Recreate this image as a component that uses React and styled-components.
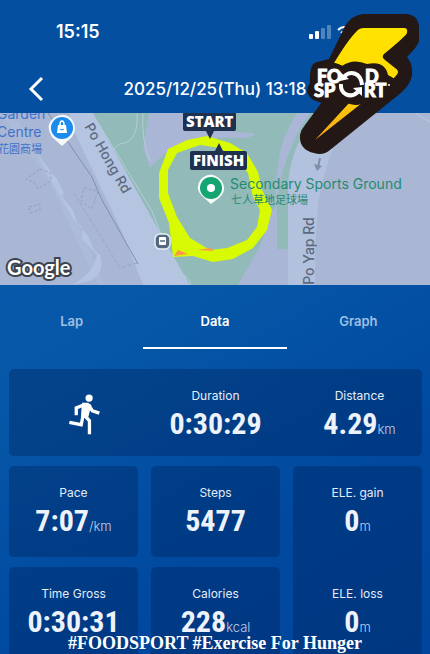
import React from "react";
import styled, { createGlobalStyle, css } from "styled-components";

const GlobalStyle = createGlobalStyle`
  *, *::before, *::after { box-sizing: border-box; }
  body { margin: 0; background: #02489a; font-family: Inter, "Noto Sans CJK TC", sans-serif; }
`;

const Screen = styled.div`
  position: relative;
  display: flex;
  flex-direction: column;
  height: 100vh;
  overflow: hidden;
  color: #fff;
  background: linear-gradient(150deg, #0a5cae 0%, #0657a8 45%, #00499f 75%, #00459b 100%);
`;

const Header = styled.header`
  flex: none;
  background: #044f9f;
`;

const StatusBar = styled.div`
  display: flex;
  align-items: center;
  justify-content: space-between;
  height: 64px;
  padding: 0 78px 0 56px;
`;

const StatusIcons = styled.div`
  display: flex;
  align-items: center;
  gap: 5px;
`;

const Clock = styled.time`
  font-size: 18px;
  line-height: 24px;
  font-weight: 600;
`;

const NavRow = styled.div`
  display: grid;
  grid-template-columns: 72px 1fr 72px;
  align-items: center;
  height: 49px;
`;

const BackButton = styled.button`
  display: flex;
  justify-content: center;
  padding: 0;
  border: 0;
  background: none;
  color: inherit;
`;

const Title = styled.h1`
  margin: 0;
  text-align: center;
  white-space: nowrap;
  font-size: 17px;
  line-height: 24px;
  font-weight: 500;
`;

const Logo = styled.div`
  position: absolute;
  z-index: 2;
  top: 14px;
  right: 10px;
  width: 120px;
  height: 140px;
`;

const LogoText = styled.text`
  font-family: Lato, sans-serif;
  font-weight: 900;
  font-size: 18px;
  fill: #fff;
  stroke: #fff;
  stroke-width: 1px;
`;

const MapPanel = styled.section`
  position: relative;
  flex: none;
  height: 172px;
  overflow: hidden;
  background: #a9b6d4;
`;

const MapDrawing = styled.svg`
  display: block;
  width: 100%;
  height: 100%;
`;

const PlaceLabel = styled.span`
  position: absolute;
  left: ${(p) => p.$x}px;
  top: ${(p) => p.$y}px;
  white-space: pre-line;
  font-size: ${(p) => p.$size || 14}px;
  line-height: 18px;
  color: ${(p) => p.$color};
`;

const RoadLabel = styled(PlaceLabel)`
  transform: translate(-50%, -50%) rotate(${(p) => p.$angle}deg);
  white-space: nowrap;
  font-weight: 500;
`;

const MapFlag = styled.span`
  position: absolute;
  left: ${(p) => p.$x}px;
  top: ${(p) => p.$y}px;
  padding: 0 3px;
  border-radius: 2px;
  background: #20304f;
  font-family: "Open Sans", sans-serif;
  font-size: 15px;
  line-height: 19px;
  font-weight: 800;

  &::after {
    content: "";
    position: absolute;
    left: calc(50% - 4px);
    ${(p) => (p.$up ? "bottom: 100%;" : "top: 100%;")}
    border: 4px solid transparent;
    ${(p) => (p.$up ? "border-top: 0; border-bottom: 8px solid #20304f;" : "border-bottom: 0; border-top: 8px solid #20304f;")}
  }
`;

const Attribution = styled.span`
  position: absolute;
  left: 7px;
  bottom: 6px;
  font-family: Lato, sans-serif;
  font-size: 20px;
  line-height: 24px;
  font-weight: 700;
  color: #fff;
  -webkit-text-stroke: 4px #3c434e;
  paint-order: stroke fill;
`;

const Tabs = styled.nav`
  display: grid;
  grid-template-columns: repeat(3, 1fr);
  flex: none;
  height: 64px;
`;

const Tab = styled.button`
  padding: 10px 0 0;
  border: 0;
  border-bottom: 2px solid transparent;
  background: none;
  font-family: inherit;
  font-size: 13px;
  line-height: 16px;
  font-weight: 600;
  color: #9fbfe3;
  ${(p) => p.$active && css`
    color: #fff;
    border-color: #fff;
  `}
`;

const Stats = styled.main`
  display: grid;
  grid-template-columns: repeat(3, 1fr);
  grid-template-rows: 87px 91px 91px;
  gap: 10px 13px;
  padding: 20px 8px 0 9px;
`;

const Card = styled.section`
  display: grid;
  align-items: start;
  padding-top: 19px;
  border-radius: 5px;
  background: rgba(0, 28, 80, 0.33);
`;

const SummaryCard = styled(Card)`
  grid-column: 1 / -1;
  grid-template-columns: repeat(3, 1fr);
  column-gap: 19px;
`;

const ElevationCard = styled(Card)`
  grid-column: 3;
  grid-row: 2 / span 2;
  grid-template-rows: 91px 91px;
  row-gap: 10px;
`;

const Activity = styled.div`
  display: flex;
  justify-content: center;
  padding: 6px 0 0 25px;
`;

const StatBox = styled.div`
  text-align: center;
`;

const StatLabel = styled.div`
  font-size: 12px;
  line-height: 16px;
  color: #e4edf8;
`;

const StatValue = styled.div`
  display: flex;
  align-items: baseline;
  justify-content: center;
  margin-top: 2px;
  white-space: nowrap;
  font-family: "Roboto Condensed", "Liberation Sans Narrow", Roboto, sans-serif;
  font-size: 30px;
  line-height: 36px;
  font-weight: 700;
  color: #edf2fb;
`;

const Unit = styled.span`
  font-family: Inter, sans-serif;
  font-size: 13px;
  line-height: 16px;
  font-weight: 300;
  color: #c0d0ea;
`;

const Caption = styled.p`
  position: absolute;
  left: 0;
  right: 0;
  bottom: 0;
  margin: 0;
  text-align: center;
  font-family: "Liberation Serif", serif;
  font-size: 18px;
  line-height: 22px;
  font-weight: 700;
`;

function Stat({ label, value, unit }) {
  return (
    <StatBox>
      <StatLabel>{label}</StatLabel>
      <StatValue>{value}{unit && <Unit>{unit}</Unit>}</StatValue>
    </StatBox>
  );
}

function SignalIcon() {
  return (
    <svg width="22" height="14" viewBox="0 0 22 14" fill="#fff" aria-hidden="true">
      <rect x="0" y="9" width="4" height="5" rx="1" />
      <rect x="6" y="6" width="4" height="8" rx="1" />
      <rect x="12" y="3" width="4" height="11" rx="1" opacity="0.3" />
      <rect x="18" y="0" width="4" height="14" rx="1" opacity="0.3" />
    </svg>
  );
}

function WifiIcon() {
  return (
    <svg width="16" height="14" viewBox="0 0 16 14" fill="none" stroke="#fff" strokeWidth="2" aria-hidden="true">
      <path d="M2 5Q8 -1 14 5M5 8Q8 5 11 8" />
    </svg>
  );
}

function BrandLogo() {
  return (
    <Logo>
      <svg width="120" height="140" viewBox="0 0 120 140" role="img" aria-label="Food Sport">
        <defs>
          <linearGradient id="bolt" x1="0" y1="0" x2="0" y2="1">
            <stop offset="0" stopColor="#ffe400" />
            <stop offset="0.55" stopColor="#ffd800" />
            <stop offset="1" stopColor="#f7a51c" />
          </linearGradient>
        </defs>
        <path d="M63 0H106Q119 1 119 14V27Q118 32 107 43Q113 50 112 61Q110 73 97 82L30 136Q23 142 14 139Q1 136 0 125Q-1 118 5 111L22 88Q11 87 8 80Q5 76 10 69Q9 49 17 48L29 45L45 12Q52 1 63 0Z" fill="#231815" />
        <path d="M64 14H104Q108 14 107 19Q106 22 84 40Q81 43 85 46L95 54Q101 57 95 63L15 126L74 62L34 49Q48 26 56 18Q59 14 64 14Z" fill="url(#bolt)" />
        <path d="M17 51Q31 45 42 52Q53 44 67 50Q85 46 88 61Q102 67 98 81Q92 88 77 86Q65 84 62 90Q51 93 43 86Q23 94 13 84Q7 77 14 68Z" fill="#231815" />
        <LogoText x="17" y="69">FO</LogoText>
        <LogoText x="65" y="69">D</LogoText>
        <LogoText x="14" y="83">SP</LogoText>
        <LogoText x="64" y="83">RT</LogoText>
        <path d="M42 52H64V88H42Z" fill="#231815" />
        <g fill="none" stroke="#fff" strokeWidth="4">
          <path d="M44 63C49 56 61 58 62 71" />
          <path d="M41 70C40 80 50 85 58 78" />
        </g>
        <path d="M40 58V67L49 65ZM53 74L62 73V82Z" fill="#fff" />
        <circle cx="89" cy="71" r="1" fill="#fff" />
      </svg>
    </Logo>
  );
}

function RunnerIcon() {
  return (
    <svg width="31" height="41" viewBox="26 28 94 124" aria-hidden="true">
      <circle cx="87" cy="40" r="11" fill="#fff" />
      <path d="M66 54L84 54L94 62L84 100L62 100L64 72Z" fill="#fff" />
      <g fill="none" stroke="#fff" strokeWidth="10">
        <path d="M76 59L48 70V92" />
        <path d="M86 62L97 79L118 86" />
        <path d="M68 96L63 121L27 114" />
        <path d="M72 92L88 109V150" />
      </g>
    </svg>
  );
}

function RouteMap() {
  return (
    <MapDrawing viewBox="0 0 430 172" preserveAspectRatio="xMidYMid slice" aria-hidden="true">
      <path d="M69 0H94L190 172H143L122 119L74 18Z" fill="#b4c4e1" />
      <path d="M0 0L20 10L58 71L78 112L105 172H98L70 113L48 66Z" fill="#adbbda" />
      <path d="M37 41L57 66L64 80L61 83L73 97L78 112L88 123L94 137L100 142Q106 160 90 168L72 172Q94 160 97 142L83 127L81 113L75 108L70 100L65 92L56 76L48 62Z" fill="#b4c4e1" />
      <path d="M93 0H318Q304 36 290 74L288 136H264L240 172H190L158 116Z" fill="#91bab9" />
      <path d="M149 0H183V8Q210 17 253 20Q258 23 243 25Q190 23 172 36Q160 44 150 55L143 34Z" fill="#a9b6d5" />
      <path d="M297 0Q280 26 278 52Q274 72 276 92L258 137L238 172H288V137H277V94Q281 42 310 0Z" fill="#a9b6d5" />
      <path d="M272 98L276 94V118L248 172H238L265 124Z" fill="#a9b6d5" />
      <path d="M315 0Q289 38 288 74V172H315Q315 88 324 63Q336 20 351 0Z" fill="#b1c1de" />
      <g fill="none" stroke="#b4cdd6">
        <path d="M97 8L152 98L170 144L181 172" />
        <path d="M143 0Q141 26 150 48M137 0Q139 30 119 31L113 37M175 163Q187 158 191 172" />
        <path d="M415 0L430 9" />
      </g>
      <path d="M48 0L92 64L102 87L138 151" fill="none" stroke="#8190ad" />
      <path d="M137 150L120 155L74 80" fill="none" stroke="#98a6c3" strokeDasharray="4 2" />
      <path d="M40 56L51 60V68L38 76L34 69L26 66ZM29 94L40 91V97L30 100ZM84 75L98 78L92 96L81 88Z" fill="none" stroke="#93a2c1" strokeDasharray="3 2" />
      <path d="M168 36L187 27L207 23L230 30L247 40L258 59L262 77L272 97L267 117L253 135L233 146L213 149L193 143L173 144L169 110L159 85V60ZM168 57V80L177 104L190 125L210 137L227 135L247 127L257 114L260 97L253 84L248 60L237 47L220 35L200 32L177 40Z" fill="#d8fb03" fillRule="evenodd" />
      <path d="M174 143L178 137L188 141ZM197 137L210 135L214 138Z" fill="#ff9a42" />
      <g>
        <path d="M62 33L52 24Q44 12 55 4Q66 -2 73 8Q78 18 70 26Z" fill="#f5f9fc" />
        <circle cx="62" cy="15" r="11" fill="#1b8cec" />
        <path d="M58 12H66L67 20H57Z" fill="#fff" />
        <path d="M60 12Q60 8 62 8Q64 8 64 12" fill="none" stroke="#fff" strokeWidth="1.5" />
        <path d="M60 16Q62 18 64 16" fill="none" stroke="#1b8cec" />
      </g>
      <path d="M211 91L202 83Q194 75 201 66Q211 57 221 67Q228 77 219 85Z" fill="#f6faf8" />
      <circle cx="211" cy="75" r="11" fill="#14a572" />
      <circle cx="211" cy="75" r="4" fill="#fff" />
      <rect x="155" y="121" width="15" height="15" rx="5" fill="#53697d" stroke="#e8f0f4" strokeWidth="1.5" />
      <rect x="159" y="124" width="7" height="8" rx="1" fill="#fff" />
      <path d="M160 128H165M160 132V134M165 132V134" stroke="#53697d" strokeWidth="1.5" />
      <path d="M320 45L318 54" fill="none" stroke="#7e8fa9" strokeWidth="2" />
      <path d="M314 51L322 53L317 58Z" fill="#7e8fa9" />
    </MapDrawing>
  );
}

export default function App() {
  return (
    <>
      <GlobalStyle />
      <Screen>
        <Header>
          <StatusBar>
            <Clock>15:15</Clock>
            <StatusIcons>
              <SignalIcon />
              <WifiIcon />
            </StatusIcons>
          </StatusBar>
          <NavRow>
            <BackButton aria-label="Back">
              <svg width="18" height="26" viewBox="0 0 18 26" fill="none" stroke="#fff" strokeWidth="3">
                <path d="M15 2L4 13L15 24" />
              </svg>
            </BackButton>
            <Title>2025/12/25(Thu) 13:18</Title>
          </NavRow>
        </Header>
        <BrandLogo />

        <MapPanel aria-label="Route map">
          <RouteMap />
          <PlaceLabel $x={-3} $y={-8} $color="#3f72cb">{"Garden\nCentre"}</PlaceLabel>
          <PlaceLabel $x={-2} $y={27} $size={11} $color="#3f72cb">花園商場</PlaceLabel>
          <RoadLabel $x={108} $y={45} $angle={60} $color="#5c6a7e">Po Hong Rd</RoadLabel>
          <RoadLabel $x={309} $y={138} $angle={-90} $color="#5c6a7e">Po Yap Rd</RoadLabel>
          <PlaceLabel $x={230} $y={62} $color="#258a72">Secondary Sports Ground</PlaceLabel>
          <PlaceLabel $x={231} $y={78} $size={11} $color="#258a72">七人草地足球場</PlaceLabel>
          <MapFlag $x={183} $y={-1}>START</MapFlag>
          <MapFlag $x={190} $y={38} $up>FINISH</MapFlag>
          <Attribution>Google</Attribution>
        </MapPanel>

        <Tabs aria-label="Activity views">
          <Tab>Lap</Tab>
          <Tab $active aria-current="page">Data</Tab>
          <Tab>Graph</Tab>
        </Tabs>

        <Stats>
          <SummaryCard>
            <Activity><RunnerIcon /></Activity>
            <Stat label="Duration" value="0:30:29" />
            <Stat label="Distance" value="4.29" unit="km" />
          </SummaryCard>
          <Card><Stat label="Pace" value="7:07" unit="/km" /></Card>
          <Card><Stat label="Steps" value="5477" /></Card>
          <ElevationCard>
            <Stat label="ELE. gain" value="0" unit="m" />
            <Stat label="ELE. loss" value="0" unit="m" />
          </ElevationCard>
          <Card><Stat label="Time Gross" value="0:30:31" /></Card>
          <Card><Stat label="Calories" value="228" unit="kcal" /></Card>
        </Stats>
        <Caption>#FOODSPORT #Exercise For Hunger</Caption>
      </Screen>
    </>
  );
}
